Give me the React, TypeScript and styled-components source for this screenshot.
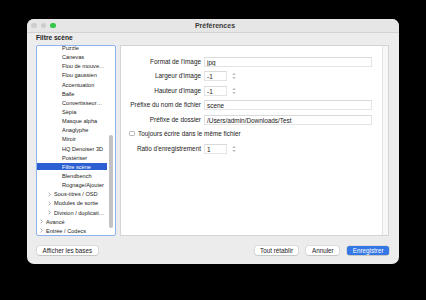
import React from 'react';
import styled, { createGlobalStyle } from 'styled-components';

const GlobalStyle = createGlobalStyle`
  html, body {
    margin: 0;
    padding: 0;
    background: #000;
  }
  * {
    box-sizing: border-box;
  }
`;

const Screen = styled.div`
  width: 426px;
  height: 300px;
  background: #000;
  padding: 19px 27px 0 27px;
  font-family: 'Liberation Sans', Arial, sans-serif;
  font-size: 6px;
  color: #222;
`;

const Window = styled.div`
  width: 372px;
  height: 245px;
  background: #ececec;
  border-radius: 7px;
  overflow: hidden;
  display: flex;
  flex-direction: column;
`;

const TitleBar = styled.div`
  height: 14px;
  display: grid;
  grid-template-columns: 1fr auto 1fr;
  align-items: center;
  background: #e6e6e6;
  border-bottom: 1px solid #d2d2d2;
  padding-left: 4px;
`;

const Lights = styled.div`
  display: flex;
  gap: 4px;
`;

const Light = styled.span<{ $color: string }>`
  width: 5.5px;
  height: 5.5px;
  border-radius: 50%;
  background: ${(p) => p.$color};
`;

const Title = styled.div`
  font-size: 7px;
  font-weight: 700;
  color: #3a3a3a;
`;

const Body = styled.div`
  flex: 1;
  display: flex;
  flex-direction: column;
  padding: 0 10px 0 9px;
`;

const SectionTitle = styled.div`
  margin-top: 1px;
  height: 8px;
  line-height: 8px;
  margin-bottom: 3px;
  font-weight: 700;
  font-size: 6.6px;
  color: #222;
`;

const Panels = styled.div`
  height: 191px;
  display: flex;
  gap: 4px;
`;

const Sidebar = styled.div`
  width: 80px;
  background: #fff;
  border: 1.5px solid #8fb3ee;
  border-radius: 2px;
  overflow: hidden;
  position: relative;
`;

const List = styled.div`
  margin-top: -2.5px;
  margin-right: 8px;
  font-size: 5.6px;
`;

const Row = styled.div<{ $level: number; $selected?: boolean }>`
  height: 9.15px;
  display: flex;
  align-items: center;
  padding-left: ${(p) => 3 + p.$level * 8}px;
  white-space: nowrap;
  overflow: hidden;
  color: ${(p) => (p.$selected ? '#fff' : '#222')};
  background: ${(p) =>
    p.$selected
      ? 'linear-gradient(transparent 1.2px, #2c60d2 1.2px, #2c60d2 calc(100% - 1px), transparent calc(100% - 1px))'
      : 'transparent'};
`;

const Chevron = styled.svg`
  width: 3px;
  height: 5px;
  margin-right: 3px;
  flex: none;
`;

const Spacer = styled.span`
  width: 6px;
  flex: none;
`;

const Thumb = styled.div`
  position: absolute;
  right: 2px;
  top: 89px;
  width: 4px;
  height: 93px;
  border-radius: 2px;
  background: #c2c2c2;
`;

const MainPanel = styled.div`
  flex: 1;
  display: flex;
  background: #fff;
  border: 1px solid #d4d4d4;
`;

const Form = styled.div`
  flex: 1;
  display: grid;
  grid-template-columns: 80px 1fr;
  grid-auto-rows: 10px;
  column-gap: 3px;
  row-gap: 4.6px;
  align-content: start;
  padding: 10.5px 10px 0 0;
  font-size: 6.4px;
`;

const Track = styled.div`
  width: 6px;
  background: #f7f7f7;
  border-left: 1px solid #e4e4e4;
`;

const Label = styled.div`
  text-align: right;
  line-height: 10px;
  white-space: nowrap;
`;

const FieldWrap = styled.div`
  display: flex;
  align-items: center;
`;

const Field = styled.div<{ $small?: boolean }>`
  height: 10px;
  line-height: 9px;
  width: ${(p) => (p.$small ? '23px' : '100%')};
  border: 1px solid #e4e4e4;
  border-top-color: #dadada;
  padding-left: 2px;
  background: #fff;
  white-space: nowrap;
  overflow: hidden;
`;

const Stepper = styled.svg`
  width: 4px;
  height: 8px;
  margin-left: 5px;
`;

const CheckRow = styled.label`
  grid-column: 1 / -1;
  height: 8px;
  display: flex;
  align-items: center;
  padding-left: 8px;
  margin-bottom: -2px;
`;

const Box = styled.span`
  width: 5.5px;
  height: 5.5px;
  border: 0.7px solid #b5b5b5;
  border-radius: 1.2px;
  margin-right: 3.5px;
  background: #fff;
`;

const Footer = styled.div`
  flex: 1;
  display: flex;
  align-items: center;
  justify-content: space-between;
  padding-left: 1px;
`;

const ButtonGroup = styled.div`
  display: flex;
  gap: 8px;
`;

const Button = styled.button<{ $primary?: boolean }>`
  height: 9px;
  padding: 0 5.5px;
  border: none;
  border-radius: 2.5px;
  font-family: inherit;
  font-size: 6.3px;
  line-height: 9px;
  color: ${(p) => (p.$primary ? '#fff' : '#222')};
  background: ${(p) => (p.$primary ? '#3478e6' : '#fff')};
  box-shadow: 0 0 0 0.5px rgba(0, 0, 0, 0.12), 0 0.5px 1px rgba(0, 0, 0, 0.2);
`;

type Item = { label: string; level: number; group?: boolean; selected?: boolean };

const items: Item[] = [
  { label: 'Puzzle', level: 2 },
  { label: 'Canevas', level: 2 },
  { label: 'Flou de mouve…', level: 2 },
  { label: 'Flou gaussien', level: 2 },
  { label: 'Accentuation', level: 2 },
  { label: 'Balle', level: 2 },
  { label: 'Convertisseur…', level: 2 },
  { label: 'Sépia', level: 2 },
  { label: 'Masque alpha', level: 2 },
  { label: 'Anaglyphe', level: 2 },
  { label: 'Miroir', level: 2 },
  { label: 'HQ Denoiser 3D', level: 2 },
  { label: 'Postériser', level: 2 },
  { label: 'Filtre scène', level: 2, selected: true },
  { label: 'Blendbench', level: 2 },
  { label: 'Rognage/Ajouter', level: 2 },
  { label: 'Sous-titres / OSD', level: 1, group: true },
  { label: 'Modules de sortie', level: 1, group: true },
  { label: 'Division / duplicati…', level: 1, group: true },
  { label: 'Avancé', level: 0, group: true },
  { label: 'Entrée / Codecs', level: 0, group: true },
];

function ChevronIcon() {
  return (
    <Chevron viewBox="0 0 3 5">
      <path d="M0.6 0.6 L2.4 2.5 L0.6 4.4" fill="none" stroke="#8a8a8a" strokeWidth="0.7" />
    </Chevron>
  );
}

function StepperIcon() {
  return (
    <Stepper viewBox="0 0 4 8">
      <path d="M0.8 3 L2 1.6 L3.2 3" fill="none" stroke="#666" strokeWidth="0.6" />
      <path d="M0.8 5 L2 6.4 L3.2 5" fill="none" stroke="#666" strokeWidth="0.6" />
    </Stepper>
  );
}

export default function App() {
  return (
    <>
      <GlobalStyle />
      <Screen>
        <Window>
          <TitleBar>
            <Lights>
              <Light $color="#cdcdcd" />
              <Light $color="#cdcdcd" />
              <Light $color="#34c84a" />
            </Lights>
            <Title>Préférences</Title>
            <div />
          </TitleBar>
          <Body>
            <SectionTitle>Filtre scène</SectionTitle>
            <Panels>
              <Sidebar>
                <List>
                  {items.map((it) => (
                    <Row key={it.label} $level={it.level} $selected={it.selected}>
                      {it.group ? <ChevronIcon /> : <Spacer />}
                      {it.label}
                    </Row>
                  ))}
                </List>
                <Thumb />
              </Sidebar>
              <MainPanel>
                <Form>
                  <Label>Format de l'image</Label>
                  <Field>jpg</Field>
                  <Label>Largeur d'image</Label>
                  <FieldWrap>
                    <Field $small>-1</Field>
                    <StepperIcon />
                  </FieldWrap>
                  <Label>Hauteur d'image</Label>
                  <FieldWrap>
                    <Field $small>-1</Field>
                    <StepperIcon />
                  </FieldWrap>
                  <Label>Préfixe du nom de fichier</Label>
                  <Field>scene</Field>
                  <Label>Préfixe de dossier</Label>
                  <Field>/Users/admin/Downloads/Test</Field>
                  <CheckRow>
                    <Box />
                    Toujours écrire dans le même fichier
                  </CheckRow>
                  <Label>Ratio d'enregistrement</Label>
                  <FieldWrap>
                    <Field $small>1</Field>
                    <StepperIcon />
                  </FieldWrap>
                </Form>
                <Track />
              </MainPanel>
            </Panels>
            <Footer>
              <Button>Afficher les bases</Button>
              <ButtonGroup>
                <Button>Tout rétablir</Button>
                <Button>Annuler</Button>
                <Button $primary>Enregistrer</Button>
              </ButtonGroup>
            </Footer>
          </Body>
        </Window>
      </Screen>
    </>
  );
}
